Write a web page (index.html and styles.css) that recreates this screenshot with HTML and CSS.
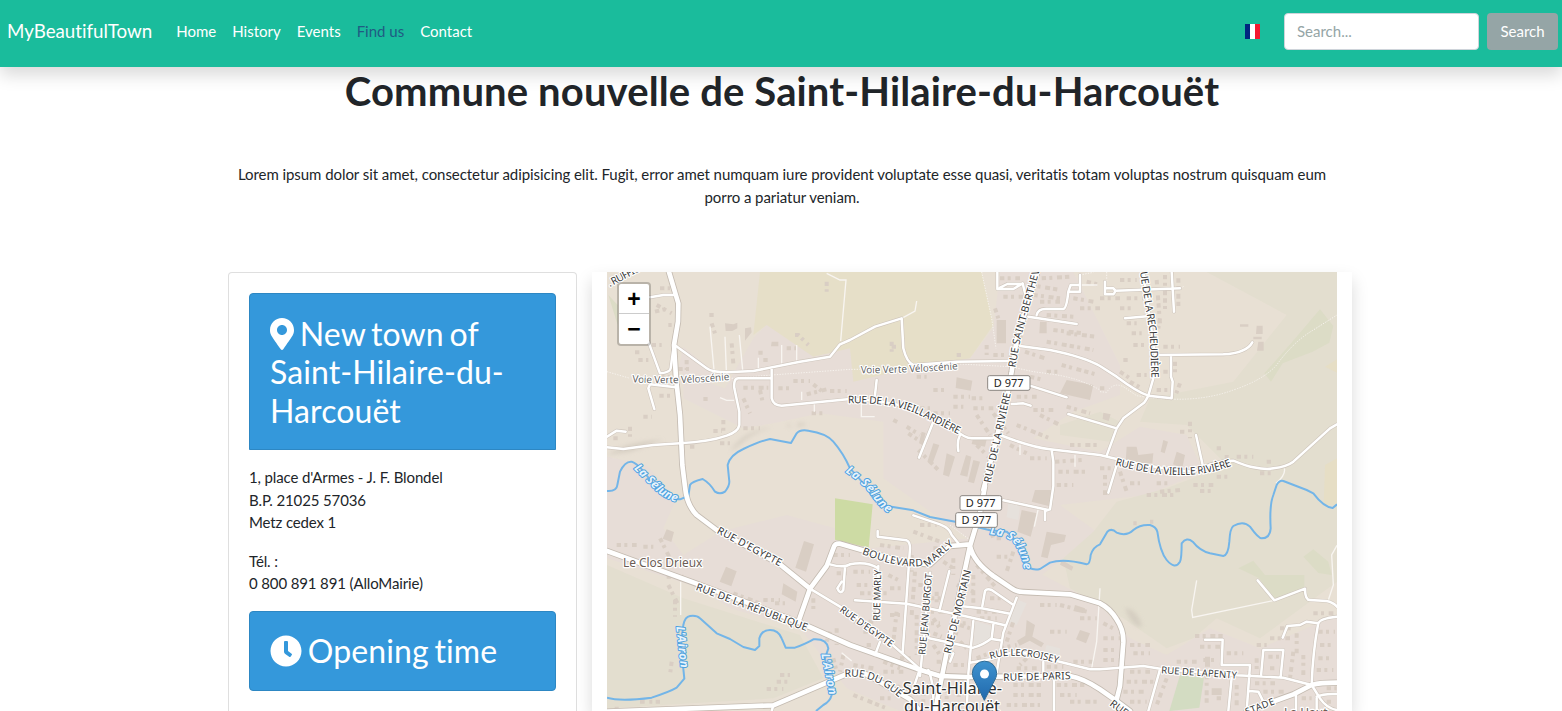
FILE: index.html
```html
<!DOCTYPE html>
<html lang="en">
<head>
<meta charset="utf-8">
<title>MyBeautifulTown - Find us</title>
<link rel="stylesheet" href="styles.css">
</head>
<body>
<nav class="navbar">
  <a class="brand">MyBeautifulTown</a>
  <ul class="nav">
    <li>Home</li><li>History</li><li>Events</li><li class="active">Find us</li><li>Contact</li>
  </ul>
  <svg class="flag" viewBox="0 0 15 15"><path fill="#00267f" d="M0 0h5v15H0z"/><path fill="#fff" d="M5 0h5v15H5z"/><path fill="#f31830" d="M10 0h5v15h-5z"/></svg>
  <form class="search">
    <input type="text" placeholder="Search...">
    <button type="button">Search</button>
  </form>
</nav>
<main class="container">
  <h1>Commune nouvelle de Saint-Hilaire-du-Harcouët</h1>
  <p class="intro">Lorem ipsum dolor sit amet, consectetur adipisicing elit. Fugit, error amet numquam iure provident voluptate esse quasi, veritatis totam voluptas nostrum quisquam eum porro a pariatur veniam.</p>
  <div class="row">
    <section class="card">
      <h2 class="banner banner-top"><svg class="pin" viewBox="0 0 384 512"><path fill="currentColor" d="M172.268 501.67C26.97 291.031 0 269.413 0 192 0 85.961 85.961 0 192 0s192 85.961 192 192c0 77.413-26.97 99.031-172.268 309.67-9.535 13.774-29.93 13.773-39.464 0zM192 272c44.183 0 80-35.817 80-80s-35.817-80-80-80-80 35.817-80 80 35.817 80 80 80z"/></svg> New town of Saint-Hilaire-du-Harcouët</h2>
      <p>1, place d'Armes - J. F. Blondel<br>B.P. 21025 57036<br>Metz cedex 1</p>
      <p>Tél. :<br>0 800 891 891 (AlloMairie)</p>
      <h2 class="banner"><svg class="clock" viewBox="0 0 512 512"><path fill="currentColor" d="M256,8C119,8,8,119,8,256S119,504,256,504,504,393,504,256,393,8,256,8Zm92.49,313h0l-20,25a16,16,0,0,1-22.49,2.5h0l-67-49.72a40,40,0,0,1-15-31.23V112a16,16,0,0,1,16-16h32a16,16,0,0,1,16,16V256l58,42.5A16,16,0,0,1,348.49,321Z"/></svg> Opening time</h2>
    </section>
    <section class="map-panel">
      <div class="map">
        <svg class="tiles" viewBox="21 21 2190 1317">
          <defs>
            <linearGradient id="pinFill" x1="0" y1="0" x2="0" y2="1"><stop offset="0" stop-color="#3f93cf"/><stop offset="1" stop-color="#2068ac"/></linearGradient>
            <filter id="soft"><feGaussianBlur stdDeviation="7"/></filter>
            <path id="minor" d="M228 243L320 310Q335 322 380 322L460 318 600 290 690 275 720 238 750 225 825 185 905 160 910 250Q920 292 940 300L1070 290 1230 288M515 312V400Q520 422 545 422L750 402Q880 405 950 440L1060 490Q1095 520 1115 520H1175L1200 510Q1290 545 1350 553L1500 570Q1660 610 1780 620 1850 585 1900 587 1940 604 1960 607 2000 615 2020 610 2060 605 2080 590L2190 490 2211 478M515 340H415Q400 340 403 370L418 440V480Q415 500 380 512 330 530 240 535L160 540 70 552 21 547M145 230L180 325Q210 322 212 310L220 250M150 97L190 90H220M228 367L150 358 145 370 163 432M21 515L50 497 77 500M1192 21V72H1240L1268 55 1275 85M1200 68L1222 57H1268M1285 155L1430 177M1310 150Q1315 130 1340 132H1390Q1400 130 1405 80L1412 60H1440V30M1440 60V80H1408M1260 243L1350 255Q1450 275 1500 303L1550 335Q1610 380 1645 392L1715 400 1718 350 1713 335V275M1670 270L1870 268Q1940 264 1957 232M1630 21L1665 270 1660 340 1645 392Q1635 412 1630 415L1570 460 1550 490 1520 572M1715 21L1722 140M1575 160L1650 153M1515 50V88H1540Q1550 78 1540 70H1520M1548 77L1740 70M1405 447L1500 475 1550 490M1290 362L1400 397M1235 417L1270 415 1292 422M830 345L825 390M1000 470L957 578M1080 510Q1070 530 1075 558M1355 555L1360 590V663L1350 733 1335 738V765M1210 706L1345 735M1788 510L1808 600M1550 600L1525 683M940 751L1020 778Q1050 790 1055 810L1075 835M833 798V815L920 826Q930 830 930 850L908 1163M765 1006L920 1016 1080 1050 1215 1081M1080 1023L1145 1030 1230 1046M1147 1023L1155 978Q1160 970 1175 975L1237 1018M1250 998L1210 1103 1190 1223M1120 1068L1105 1225M1180 1078L1175 1120Q1150 1140 1120 1148L980 1118M1200 1126L1175 1122M1048 918L1018 1038M990 923L960 1233M835 903L830 1063M840 1130L825 1170M750 898Q800 888 835 910M690 898Q730 910 750 898M735 905L730 975Q720 990 712 970L725 950M1110 1193L1170 1183 1250 1158 1370 1188 1470 1213H1500L1630 1203 1690 1213 1910 1231 2050 1238 2135 1260M2135 1260Q2138 1163 2155 1073M2211 1055Q2160 1060 2155 1075L2120 1070 2100 1080 2062 1083 2048 1118M1973 946L2023 1006 2115 971Q2115 1005 2130 1005L2180 1008Q2200 1012 2211 1025M1815 1124H1868L1865 1200H1950L1940 1338M1983 1233L1990 1155H2050L2042 1235M1895 1238L1885 1338M1680 1213L1645 1338M1948 1278L1975 1280 1990 1310M2135 1260L2160 1300Q2180 1330 2211 1335M2150 1295Q2170 1285 2211 1287M2088 1290V1338M2150 1300V1338M630 971L750 1043 870 1133 955 1208M960 1211L940 1270M985 1215Q1000 1250 1000 1300M1105 1230L1100 1338M1330 1190V1225M1362 1240V1338M1060 1165L1050 1190M520 1321L515 1338"/>
            <path id="major" d="M207 21L235 115 234 170 222 240 228 340 240 450 247 600 255 665Q260 720 290 750L350 795 540 898 630 971M21 858L290 956 600 1073 750 1140 950 1211 1020 1233 1100 1236 1410 1233Q1450 1240 1500 1273L1550 1308 1590 1338M1312 21L1250 225 1235 320 1220 400 1150 675M1155 663L1140 743 1110 843 1095 913 1040 1163 1012 1303 1005 1338M1110 843Q1120 890 1180 933L1235 970Q1250 981 1270 981L1410 988 1500 1015Q1530 1030 1550 1063 1572 1095 1570 1133L1560 1263 1550 1303M1110 838L1050 843 990 898Q950 895 900 888L720 836Q705 835 702 845L680 903 630 971 597 1065M21 1340L520 1321 750 1223Q790 1222 810 1233L930 1303 960 1338M1940 1338L2080 1288 2135 1260Q2160 1253 2211 1253"/>
            <path id="t1" d="M29 66L129 13"/><path id="t2" d="M97 352Q240 360 395 344"/><path id="t3" d="M782 325Q930 325 1083 312"/>
            <path id="t4" d="M1246 308L1261 225 1322 5"/><path id="t5" d="M744 415Q870 411 950 446L1085 513"/><path id="t6" d="M1172 655L1236 370"/>
            <path id="t7" d="M1620 21L1649 205 1655 350"/><path id="t8" d="M1545 600Q1770 662 1910 595"/><path id="t9" d="M349 803L565 919"/>
            <path id="t10" d="M286 974L470 1043 645 1108"/><path id="t11" d="M785 867Q910 917 990 900L1077 827"/><path id="t12" d="M840 1067L844 895"/>
            <path id="t13" d="M976 1170L998 905"/><path id="t14" d="M1052 1168L1118 900"/><path id="t15" d="M717 1038L890 1161"/><path id="t16" d="M1172 1183Q1250 1155 1385 1199"/>
            <path id="t17" d="M1210 1248L1435 1242"/><path id="t18" d="M734 1236Q830 1227 910 1311"/><path id="t19" d="M1683 1225L1925 1242"/><path id="t20" d="M1940 1351L2035 1313"/>
            <path id="t21" d="M1527 1320L1594 1370"/><path id="r1" d="M101 611L158 668Q193 706 252 716"/><path id="r2" d="M736 621Q798 663 823 703 848 738 877 749"/><path id="r3" d="M1169 808Q1232 813 1247 843 1272 883 1272 922"/>
            <path id="r4" d="M229 1085L243 1220"/><path id="r5" d="M664 1168L690 1300"/>
          </defs>
          <path fill="#e8e0d4" d="M21 21h2190v1317H21z"/>
          <g fill="#e7ddd7">
            <path d="M375 370L460 220 500 178 640 270 750 260 1110 280 1180 190 1200 21H1420L1500 180 1560 300V390L1420 440 1300 520 1500 560 1620 485 1760 510 1810 620 1640 690 1380 720 1490 800 1300 950 1160 860 850 640 850 470 660 445 520 475 430 490 250 400V330zM21 575L140 600 230 700 190 790 250 870 360 800 560 750 705 790 810 850 1110 820 1330 930 1500 1020 1590 1120 1700 1170 1830 1090 1980 1150 2211 1050V1338H900L740 1270 600 1090 390 1030 300 970 21 880z"/>
            <path d="M690 185l60 45v35H640zM250 245l60 50 60 40-70 40-65-60z"/>
          </g>
          <path fill="#e6dfc8" d="M480 21H1145L1180 180 1110 280 930 310 760 350 750 250 640 275 500 180 460 210z"/>
          <g fill="#e3decf">
            <path d="M1820 21H2211V950L1980 1120 1850 1060 1780 1120 1700 1150 1570 1060 1410 970 1390 880 1480 800 1550 710 1700 670 1880 600 1760 480 1620 470 1650 400 1900 350 2060 150zM21 900L250 1000 600 1110 670 1240 520 1300 21 1330zM1380 480l120-40 60 30-30 60-150-20z"/>
          </g>
          <path fill="#e6dec5" d="M2175 305l36-22v40zM2175 600l36-20v140h-40z"/>
          <g fill="#dcdcc6"><path d="M2160 133l40 50-12 50-50 27-90 35-35 55-20-25 80-90zM1915 910l45-23 35 43h118v45l-95 30-40-65zM2110 875l30-22 45 37 10 40-40-6zM25 90l28 30v60z"/></g>
          <path fill="#cddba4" d="M705 700l113 18-12 130-101-24z"/><path fill="#d3dcc2" d="M1740 1230l72 8-14 90-90 10z"/>
          <g class="hill"><path d="M21 570Q80 530 190 525L90 560zM390 560q40-65 125-72-60 15-100 55zM590 485q5-20 30-5M560 485q5-15 15 0M1575 1030q35 0 52 55-30 5-52-55"/></g>
          <path fill="#e6e1dc" d="M1125 1068l50 15v45l-55 20zM1255 1005l25 10-30 65-25-10zM1225 710l35 10-5 45-35-8zM1340 1140l40 10v25h-50z"/>
          <g fill="#d9cec4">
            <path d="M375 175l25 3 12-5v17l-15 8h-20zM435 190l18-3 2 15-20 25zM515 230h20v14h-22zM612 828l30 10-24 82-32-12zM378 905l32 14-16 45-35-14zM550 955l42 25-5 30-42-22zM200 793l22 8-8 30-26-10zM1070 337l47 10-5 30-45-8zM1190 165h28v70h-28zM1320 170h20v35h-22zM1400 345l80 15-10 45-90-20zM1580 545h30l5 25 45-5-3 30-80-5zM1730 560l25 10-8 40-28-12zM1690 525l14 5-10 35-12-5zM1970 182h18v25h-20zM1975 230h16v27h-20zM1960 215h25v8h-25zM1920 178h25v7h-25zM1510 443l22 5-6 20-18-6zM1305 675h50v50l-60-15zM1265 735l45 10-18 70-40-15zM1340 800l58 10-5 20-40 10-10 40-20-5zM1280 1065l25 15-8 35 35 20-8 12-35-20-30 15-8-15 25-15zM1440 1095l30 10-12 30-30-12zM1835 1270h30v20h-30zM1815 1175h15v30h-15z"/>
            <path d="M1120 515l40 8-5 22-40-8zM1000 535l18 5-20 55-16-5zM1040 565l25 10-18 60-18-6zM1098 570l16 5-12 60-22-5zM1120 585l20 5-18 65-18-5zM965 500l12 4-8 35-12-4zM1425 1020l30 10-5 15-30-7zM1385 885l35 20-5 12-35-18z"/>
          </g>
          <g class="houses">
            <path d="M170 120L215 145M180 70h30M165 140l40-10M328 150h20M335 175l10 30M395 235l5 60M475 263h20M490 285h15M585 210h10l30 30M560 250h30M260 285v30M235 312h35M105 262h20M155 240h30M115 285h30M205 180h10M180 335h40M178 392h45M430 368h75M430 400l20 45M480 375l10 45M535 370h35M580 348h50M620 388l60-15M640 358l25 20M310 402h20M370 465v35M340 498h25M360 535h30M270 545h15M130 455h25M90 485v30M40 520h15M430 490h50M680 50v30M635 445h40M690 378h50"/>
            <path d="M950 335h30M1000 375h40M1060 395h50M1115 400h40M1060 425h30M1120 430h60M1130 450l40 60M960 430h30M1000 445h50M880 465l20 10M920 485l40 25M925 505l45 30M955 555l60 60M1130 540l40 40M1180 445l45 60M1250 395h60M1300 435h60M1250 480l100 40M1320 450l60 30M1410 540h80M1340 320h40M1290 335l40 10M1400 425l70 20M1180 270h70M1160 240v30M1070 270h15M875 230v30M875 245h15"/>
            <path d="M1200 40h60M1210 95h60M1185 130l10 30M1290 60l90 15M1300 90l80 10M1320 110h60M1340 150l80 5M1420 100l60 10M1440 130h60M1360 195l90 10M1340 230l140 25M1400 205l90 10M1460 50l40 10M1270 190l-10 30M1325 40l90-5M1275 260l60 20M1385 300l110 30"/>
            <path d="M1560 45h50M1580 100h50M1500 100h60M1560 130h40M1580 175h30M1595 205h30M1600 240h40M1570 285h20M1610 330h30M1560 320l30 20M1590 350l35 20M1670 45l10 130M1695 30v110M1735 40v90M1680 160l-5 30M1690 245h50M1725 290v40M1690 320h20M1670 375h50M1740 355l-15 40M1770 470v50M1740 500h20M1500 370h20"/>
            <path d="M1500 610h40M1515 630v60M1560 620l20 60M1590 655h30M1670 655h40M1780 660h60M1850 550h15M1880 570v20M1910 575h50M1980 625h40M1850 635h40M2000 590h20M1365 590l80-5M1375 620h80M1370 660h50M1290 580h50M1230 540l50 25"/>
            <path d="M50 840h60M130 845h30M180 820l30 60M200 935h50M205 960l30 60M225 1005v50M215 1190l-5 40M500 1272h50M530 1250h40M540 1230h30M180 1310h-60M50 1325v15M400 985l80 30M420 1010l60 20M490 1005h50M525 1015h30M640 1000v40M690 1100l-10 30M710 1090v50M730 1170l-10 50M700 1180l10 40"/>
            <path d="M840 840l70 10M700 870h50M710 925h30M760 920h50M770 960h50M780 985h80M870 970h40M865 930l40 20M890 1040l-10 90M870 1050h30M935 870v50M945 920l-10 130M950 1050v120M970 1040h70M1000 1060l20 30M1010 980v40M1030 890l30 20M1060 880v50M1070 960l50 20M1120 930v90M1130 900l60 70M1170 1000h40M1080 1080l30 10M1070 1100l-20 50M1080 1130l20 20M1130 1180l50-20M1130 1200h50M1060 1200h40M1200 1150l50-10M1220 1130l20-60M1250 1210h60M1340 1205h50M1420 1190h70M1240 1260h90M1240 1290h90M1220 1320h100M1370 1260h90M1380 1290h50M1410 1310h80M1280 1180l-20 20M1320 1020h50M1380 1020l80 20M1440 1060h50M1350 1100h50M940 800l80 30M960 780h50M1000 850h40M1160 700h40M1160 760l20 60M1190 820h20M1240 860l-20 60M1150 780h10M1190 875h40"/>
            <path d="M760 1070h60M790 1100h30M800 1140h20M760 1200l60 10M850 1190l50 20M850 1220h60M870 1255l50 20M900 1180h40M1010 1190h15M970 1140v40M1000 1140l20 30M1070 1290h20M1040 1270v60M840 1300h40M760 1290l100 40M970 1280v40M1000 1105l25 10M960 1100h30M955 960h30M990 1000h40M970 1075h50M1065 1075h40M1130 1040h60M1140 1060h50"/>
            <path d="M1510 1075l40 20M1510 1120h50M1510 1155h40M1510 1185h50M1590 1140h60M1600 1165h50M1730 1190h60M1785 1113h90M1800 1145h60M1810 1185h40M1880 1165h50M1590 1220h60M1580 1250h80M1570 1280h70M1590 1310h50M1700 1240l-30 80M1820 1230v90M1850 1300h20M1910 1260v70M1965 1255h60M1990 1280h70M2010 1120h60M2040 1090h40M2090 1105v60M2080 1160l-10 80M2110 1170v60M2155 1100h50M2160 1140h40M2155 1180h40M2150 1215h50M2140 1045h60M1970 1140h30M1970 1180v40M2005 1175h40M2010 1210h20M2180 1270h30M2105 1300h30M2180 1310h20M1640 690h80M1650 770h10M1600 775h10M1680 680l60-5M1800 678h40"/>
          </g>
          <g class="path"><path d="M21 320L90 340M395 340L515 330 750 313H780M1080 297L1230 305 1300 320 1360 328Q1440 340 1500 375M1145 21L1175 160 1188 250M1500 380L1520 382Q1540 350 1570 365L1610 392Q1780 420 1900 375 1990 345 2030 300 2080 230 2140 195L2211 150M1520 21V50M1440 30l40-8M1050 780l60 45M1740 70l12-6"/></g>
          <g class="thin"><path d="M330 185L342 315M375 215L379 315M418 210L428 315M475 278V312M545 240V300M590 240V290M680 25L720 45H738L722 228M605 380V405M643 415v25M360 398l20 8h22M905 160l40-22 5-30M784 410v45h40M1790 946L1775 1035 1778 1057 2023 1006M2211 841L2195 870 2200 960 2185 1005M242 950V1050M1440 60h52M1260 540v30M1425 570v35M2053 610q5 20-25 45M1500 970l-10 160-15 80M1315 730l-12 55M725 1163l30 25"/></g>
          <use href="#minor" class="case-minor"/><use href="#major" class="case-major"/>
          <g class="river"><path d="M21 678Q50 680 52 660L60 620Q75 588 95 590 120 598 160 660 200 705 240 703L265 693 270 660Q275 650 308 642 330 655 345 680 360 690 375 680 388 663 388 650L383 600Q390 570 430 552 480 528 510 522L573 534 590 505Q600 493 625 497 680 505 700 530 730 565 750 610 790 650 820 700 840 720 860 723L940 736 990 756 1070 771 1170 796 1220 800Q1260 830 1270 890 1290 920 1320 912L1350 893Q1390 880 1460 898 1470 898 1472 870 1480 845 1500 838L1522 800Q1535 788 1550 803 1580 815 1600 795 1620 778 1650 780 1668 785 1672 800 1680 860 1700 885 1725 915 1740 890 1745 880 1745 835 1760 815 1778 830 1800 858 1830 865L1870 873Q1885 870 1888 830 1890 790 1900 783 1930 765 1950 785 1975 820 1985 820 2010 820 2012 790 2008 720 2020 690L2030 660Q2038 645 2050 648L2120 675 2140 685Q2170 725 2198 729L2211 718M21 1298Q60 1310 155 1298 210 1280 230 1268L253 1241 243 1143 250 1080Q255 1055 270 1053 290 1050 300 1060L350 1105 390 1122 430 1146 465 1155 478 1143V1120Q485 1095 510 1095 535 1095 545 1120L557 1148H585Q620 1135 640 1123 680 1120 685 1150L675 1180 695 1290Q690 1310 670 1320L648 1338"/></g>
          <use href="#minor" class="fill-minor"/><use href="#major" class="fill-major"/>
          <g class="street">
            <text><textPath href="#t1" textLength="108">. RUFFIG</textPath></text>
            <text><textPath href="#t4" textLength="303">RUE SAINT-BERTHEV</textPath></text>
            <text><textPath href="#t5" textLength="350">RUE DE LA VIEILLARDIÈRE</textPath></text>
            <text><textPath href="#t6" textLength="276">RUE DE LA RIVIÈRE</textPath></text>
            <text><textPath href="#t7" textLength="320">UE DE LA RECHEUDIÈRE</textPath></text>
            <text><textPath href="#t8" textLength="356">RUE DE LA VIEILLE RIVIÈRE</textPath></text>
            <text><textPath href="#t9" textLength="215">RUE D'EGYPTE</textPath></text>
            <text><textPath href="#t10" textLength="355">RUE DE LA RÉPUBLIQUE</textPath></text>
            <text><textPath href="#t11" textLength="304">BOULEVARD MARLY</textPath></text>
            <text class="s"><textPath href="#t12" textLength="152">RUE MARLY</textPath></text>
            <text class="s"><textPath href="#t13" textLength="245">RUE JEAN BURGOT</textPath></text>
            <text><textPath href="#t14" textLength="258">RUE DE MORTAIN</textPath></text>
            <text class="s"><textPath href="#t15" textLength="190">RUE D'EGYPTE</textPath></text>
            <text class="s"><textPath href="#t16" textLength="205">RUE LECROISEY</textPath></text>
            <text><textPath href="#t17" textLength="202">RUE DE PARIS</textPath></text>
            <text><textPath href="#t18" textLength="180">RUE DU GUÉ</textPath></text>
            <text class="s"><textPath href="#t19" textLength="228">RUE DE LAPENTY</textPath></text>
            <text class="s"><textPath href="#t20" textLength="92">STADE</textPath></text>
            <text><textPath href="#t21">RUE</textPath></text>
          </g>
          <g class="trail"><text><textPath href="#t2" textLength="292">Voie Verte Véloscénie</textPath></text><text><textPath href="#t3" textLength="292">Voie Verte Véloscénie</textPath></text></g>
          <g class="water"><text><textPath href="#r1" textLength="165">La Sélune</textPath></text><text><textPath href="#r2" textLength="180">La Sélune</textPath></text><text><textPath href="#r3" textLength="165">La Sélune</textPath></text><text><textPath href="#r4" textLength="125">L'Airon</textPath></text><text><textPath href="#r5" textLength="125">L'Airon</textPath></text></g>
          <g class="shield"><rect x="1163" y="332" width="127" height="44" rx="6"/><rect x="1080" y="692" width="125" height="44" rx="6"/><rect x="1067" y="743" width="125" height="44" rx="6"/><text x="1226" y="366">D 977</text><text x="1142" y="726">D 977</text><text x="1129" y="777">D 977</text></g>
          <text class="hamlet" x="69" y="907" textLength="238">Le Clos Drieux</text>
          <text class="hamlet" x="2052" y="1356">La Haut</text>
          <g class="town"><text x="908" y="1287" textLength="298">Saint-Hilaire-</text><text x="912" y="1340" textLength="288">du-Harcouët</text></g>
          <path fill="url(#pinFill)" stroke="#2e6c97" stroke-width="3" d="M1153 1306L1128 1255C1120 1240 1117 1234 1117 1225a36.500 36.500 0 0 1 73 0C1190 1234 1187 1240 1179 1255z"/><circle cx="1153.500" cy="1227" r="13.500" fill="#fff"/>
        </svg>
        <div class="zoom"><a>+</a><a>−</a></div>
      </div>
    </section>
  </div>
</main>
</body>
</html>
```

FILE: styles.css
```css
* { box-sizing: border-box; }
html { height: 711px; overflow: hidden; }
body { margin: 0; height: 711px; overflow: hidden; font: 15px/1.5 Lato, sans-serif; font-variant-ligatures: none; color: #212529; background: #fff; }
.navbar { position: relative; z-index: 2; display: flex; align-items: center; height: 67px; padding: 0 4px 4px 7px; background: #1abc9c; color: #fff; box-shadow: 0 8px 16px rgba(0,0,0,.15); }
.brand { font-size: 18.75px; }
.nav { display: flex; gap: 16px; margin: 0 auto 0 24px; padding: 0; list-style: none; }
.nav .active { color: #205b83; }
.flag { width: 15px; height: 15px; margin-right: 24px; }
.search { display: flex; gap: 8px; }
.search input { width: 195px; height: 37px; padding: 5px 12px 7px; border: 1px solid #ced4da; border-radius: 4px; font: 15px Lato, sans-serif; }
.search input::placeholder { color: #95a5a6; opacity: 1; }
.search button { width: 71px; height: 37px; padding: 0 0 2px; border: 0; border-radius: 4px; background: #95a5a6; color: #fff; font: 15px Lato, sans-serif; }
.container { width: 1140px; height: 644px; margin-left: 212px; }
h1 { margin: 0; font-size: 40px; line-height: 48px; font-weight: 700; letter-spacing: .13px; text-align: center; }
.intro { margin: 48px 15px 64px; letter-spacing: -.06px; text-align: center; }
.row { display: flex; align-items: stretch; gap: 15px; height: 439px; padding-left: 16px; }
.card { width: 349px; padding: 20px; border: 1px solid #dfdfdf; border-bottom: 0; border-radius: 4px 4px 0 0; }
.card p { margin: 16px 0; letter-spacing: -.13px; }
.banner { margin: 0; padding: 20px; border: 1px solid #2d87c3; border-radius: 4px; background: #3498db; color: #fff; font-size: 32px; font-weight: 400; line-height: 38.4px; letter-spacing: .1px; word-spacing: -2.5px; }
.banner-top { padding: 21px 20px 19px; border-radius: 4px 4px 0 0; }
.banner svg { height: 32px; vertical-align: -4px; }
.pin { width: 24px; }
.clock { width: 32px; }
.map-panel { width: 760px; padding: 0 15px; background: #fff; box-shadow: 0 8px 16px rgba(0,0,0,.15); }
.map { position: relative; height: 439px; overflow: hidden; }
.tiles { display: block; width: 730px; height: 439px; }
.zoom { position: absolute; left: 10px; top: 10px; width: 34px; border: 2px solid rgba(0,0,0,.2); border-radius: 4px; background: #fff; background-clip: padding-box; }
.zoom a { display: block; height: 30px; font: bold 23px/31px "Liberation Sans", sans-serif; text-align: center; color: #000; }
.zoom a:first-child { border-bottom: 1px solid #ccc; }
.hill { fill: #cfc7bb; opacity: .7; filter: url(#soft); }
.houses { fill: none; stroke: #d9cec4; stroke-width: 12; stroke-dasharray: 13 10 9 14 15 9; }
.path { fill: none; stroke: #f7f3ee; stroke-width: 3; stroke-dasharray: 4 4; }
.thin { fill: none; stroke: #f8f5f1; stroke-width: 4; }
.case-minor, .case-major, .fill-minor, .fill-major { fill: none; stroke-linejoin: round; stroke-linecap: round; }
.case-minor { stroke: #cfc6bd; stroke-width: 11; }
.case-major { stroke: #c4bbb1; stroke-width: 19; }
.fill-minor { stroke: #fff; stroke-width: 7.5; }
.fill-major { stroke: #fff; stroke-width: 14; }
.river { fill: none; stroke: #73b5e8; stroke-width: 6; stroke-linejoin: round; }
.tiles text { font-family: "Noto Sans", sans-serif; paint-order: stroke; stroke: #fff; stroke-width: 7px; stroke-linejoin: round; }
.street text { font-size: 31px; fill: #3a3a3a; }
.street .s { font-size: 29px; }
.trail text { font-size: 30px; fill: #666; }
.water text { font-size: 35px; font-weight: 700; font-style: italic; fill: #e8f3fb; stroke: #4ea2e0; stroke-width: 6px; }
.shield text { font-size: 33px; text-anchor: middle; fill: #222; stroke: none; }
.shield rect { fill: #fff; stroke: #8c8782; stroke-width: 3; }
.tiles .hamlet { font-size: 36px; fill: #6b5d55; }
.town text { font-size: 49px; fill: #2f2f2f; }
```
